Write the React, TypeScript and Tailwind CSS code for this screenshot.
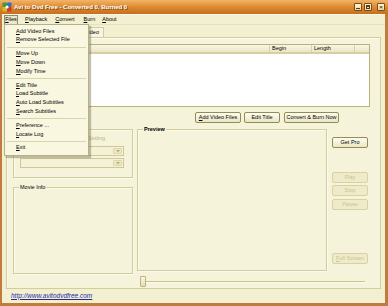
import React from "react";

const menuItems: (string | null)[] = [
  "Add Video Files",
  "Remove Selected File",
  null,
  "Move Up",
  "Move Down",
  "Modify Time",
  null,
  "Edit Title",
  "Load Subtitle",
  "Auto Load Subtitles",
  "Search Subtitles",
  null,
  "Preference ...",
  "Locate Log",
  null,
  "Exit",
];

function Mn({ text }: { text: string }) {
  return (
    <>
      <span className="underline">{text[0]}</span>
      {text.slice(1)}
    </>
  );
}

function Btn({
  children,
  disabled,
  className = "",
}: {
  children: React.ReactNode;
  disabled?: boolean;
  className?: string;
}) {
  return (
    <div
      className={`h-[11px] flex items-center justify-center rounded-[2px] border text-[5.5px] leading-none ${
        disabled
          ? "border-[#d8d2a2] bg-[#efebca] text-[#c9c391]"
          : "border-[#948c55] bg-gradient-to-b from-[#fdfcf1] to-[#ebe6c4] text-black"
      } ${className}`}
    >
      {children}
    </div>
  );
}

function Group({
  label,
  bold,
  className = "",
  children,
}: {
  label?: string;
  bold?: boolean;
  className?: string;
  children?: React.ReactNode;
}) {
  return (
    <div className={`relative border border-[#d3cd9e] shadow-[inset_1px_1px_0_#fbfaee,1px_1px_0_#fbfaee] ${className}`}>
      {label && (
        <span
          className={`absolute left-[5px] -top-[4px] px-[1px] bg-[#f5f3da] text-[5.5px] leading-[7px] text-black ${
            bold ? "font-bold" : ""
          }`}
        >
          {label}
        </span>
      )}
      {children}
    </div>
  );
}

function Combo() {
  return (
    <div className="h-[10px] w-[104px] flex border border-[#cec89a] bg-[#f4f1d6]">
      <div className="flex-1" />
      <div className="w-[9px] my-[1px] mr-[1px] flex items-center justify-center rounded-[1px] bg-[#ece7c6] border border-[#ddd7aa]">
        <svg width="4" height="3" viewBox="0 0 4 3">
          <path d="M0 0h4L2 2.5z" fill="#b8b07a" />
        </svg>
      </div>
    </div>
  );
}

export default function App() {
  return (
    <div className="relative w-[388px] h-[306px] overflow-hidden flex flex-col bg-[#c27b3f] font-['Liberation_Sans',Arial,sans-serif] select-none">
      {/* title bar */}
      <div className="h-[14px] flex items-center bg-gradient-to-b from-[#f2b566] via-[#dc8a30] to-[#c76f20] pl-[2px] pr-[3px]">
        <svg width="10" height="10" viewBox="0 0 10 10" className="shrink-0">
          <rect x="0.5" y="0.5" width="4.5" height="4.5" rx="1" fill="#3f9a3a" />
          <rect x="5" y="0.5" width="4.5" height="4.5" rx="1" fill="#2f6fd0" />
          <rect x="0.5" y="5" width="4.5" height="4.5" rx="1" fill="#e0b422" />
          <rect x="5" y="5" width="4.5" height="4.5" rx="1" fill="#d23a2a" />
          <circle cx="5" cy="5" r="1.6" fill="#fff" />
        </svg>
        <span className="ml-[2px] text-[6px] font-bold text-white leading-none [text-shadow:1px_1px_0_#8a4a10]">
          Avi to Dvd Free - Converted 0, Burned 0
        </span>
        <div className="ml-auto flex items-center gap-[2px]">
          <div className="w-[8px] h-[8px] rounded-[1px] border border-[#7d4a1e] bg-gradient-to-b from-[#fbf6da] to-[#e2d79e] flex items-end justify-center pb-[1px]">
            <div className="w-[4px] h-[1px] bg-[#5a3a10]" />
          </div>
          <div className="w-[8px] h-[8px] rounded-[1px] border border-[#7d4a1e] bg-gradient-to-b from-[#fbf6da] to-[#e2d79e] flex items-center justify-center">
            <div className="w-[4px] h-[4px] border border-[#5a3a10] border-t-2" />
          </div>
          <div className="ml-[3px] w-[8px] h-[8px] rounded-[1px] border border-[#7d4a1e] bg-gradient-to-b from-[#fbf6da] to-[#e2d79e] flex items-center justify-center text-[6px] leading-none font-bold text-[#5a3a10]">
            ×
          </div>
        </div>
      </div>

      {/* body */}
      <div className="flex-1 flex flex-col bg-[#f3f0d2] ml-[2px] mr-[3px] mb-[3px]">
        {/* menu bar */}
        <div className="h-[10px] flex items-center text-[5.5px] leading-none text-black border-t border-[#fbf9ea]">
          <div className="ml-[2px] w-[14px] h-[10px] flex items-center justify-center border border-[#8f8b70] bg-[#ebe8cc]">
            <Mn text="Files" />
          </div>
          <span className="ml-[7px]"><Mn text="Playback" /></span>
          <span className="ml-[8px]"><Mn text="Convert" /></span>
          <span className="ml-[9px]"><Mn text="Burn" /></span>
          <span className="ml-[7px]"><Mn text="About" /></span>
        </div>

        {/* tab strip */}
        <div className="h-[13px] flex items-end pl-[4px] border-t border-[#e6e1bd]">
          <div className="h-[10px] w-[98px] flex items-center justify-end pr-[4px] bg-[#f7f5df] border border-b-0 border-[#d3cd9e] text-[5.5px] leading-none">
            Add Video
          </div>
        </div>

        {/* tab page */}
        <div className="mx-[4px] h-[252px] border border-[#d3cd9e] bg-[#f5f3da] pl-[5px] pt-[6px] flex flex-col shadow-[inset_1px_1px_0_#fcfbf0]">
          {/* list */}
          <div className="w-[358px] h-[63px] border border-[#b9b27a] bg-white flex flex-col">
            <div className="h-[9px] flex text-[5.5px] leading-none bg-gradient-to-b from-[#f8f6e4] to-[#ebe6c6] border-b-2 border-[#d6cf9e]">
              <div className="w-[257px] border-r border-[#d9d3a8]" />
              <div className="w-[42px] flex items-center pl-[2px] border-r border-[#d9d3a8]">Begin</div>
              <div className="w-[43px] flex items-center pl-[2px] border-r border-[#d9d3a8]">Length</div>
              <div className="flex-1" />
            </div>
          </div>

          {/* action buttons */}
          <div className="w-[358px] mt-[5px] flex justify-end pr-[31px]">
            <Btn className="w-[46px]">
              <span><span className="underline">A</span>dd Video Files</span>
            </Btn>
            <Btn className="w-[36px] ml-[3px]">Edit Title</Btn>
            <Btn className="w-[55px] ml-[4px]">Convert &amp; Burn Now</Btn>
          </div>

          {/* lower area */}
          <div className="mt-[6px] ml-[1px] flex">
            <div className="w-[120px] flex flex-col">
              <Group className="h-[49px] flex flex-col pl-[6px]">
                <div className="mt-[5px] ml-[68px] text-[5.5px] leading-[6px] text-[#b9b48f]">Setting</div>
                <div className="mt-[5px]"><Combo /></div>
                <div className="mt-[2px]"><Combo /></div>
              </Group>
              <Group label="Movie Info" className="mt-[9px] h-[87px]" />
            </div>

            <div className="ml-[4px] flex flex-col">
              <div className="flex">
                <Group label="Preview" bold className="w-[190px] h-[142px]" />
                <div className="ml-[5px] w-[36px] flex flex-col">
                  <Btn className="mt-[8px] h-[10px]">Get Pro</Btn>
                  <Btn disabled className="mt-[24px] h-[10px]">Play</Btn>
                  <Btn disabled className="mt-[2px] h-[10px]">Stop</Btn>
                  <Btn disabled className="mt-[3px] h-[10px]">Pause</Btn>
                  <Btn disabled className="mt-[43px] h-[10px]">
                    <span><span className="underline">F</span>ull Screen</span>
                  </Btn>
                </div>
              </div>
              {/* seek slider */}
              <div className="mt-[5px] ml-[3px] w-[225px] h-[11px] flex items-center">
                <div className="w-[6px] h-[11px] shrink-0 rounded-[1px] border border-[#bdb47c] bg-gradient-to-b from-[#faf8e6] to-[#e4ddb2]" />
                <div className="flex-1 h-[2px] bg-[#cbc38c] border-b border-[#fbfaee]" />
              </div>
            </div>
          </div>
        </div>

        {/* footer link */}
        <div className="flex-1 flex items-center pl-[9px]">
          <span className="text-[6.5px] italic leading-none text-[#1d2a9c] underline">http://www.avitodvdfree.com</span>
        </div>
      </div>

      {/* open Files menu */}
      <div className="absolute left-[4px] top-[24px] w-[85px] py-[2px] bg-[#f9f7df] border border-[#b5b08a] shadow-[2px_2px_1px_rgba(90,80,40,0.35)] flex flex-col text-[5.5px] leading-none text-black">
        {menuItems.map((item, i) =>
          item === null ? (
            <div key={i} className="h-[5px] flex items-center px-[2px]">
              <div className="w-full h-[1px] bg-[#d9d4b0]" />
            </div>
          ) : (
            <div key={i} className="h-[8.8px] flex items-center pl-[11px]">
              <Mn text={item} />
            </div>
          )
        )}
      </div>
    </div>
  );
}
